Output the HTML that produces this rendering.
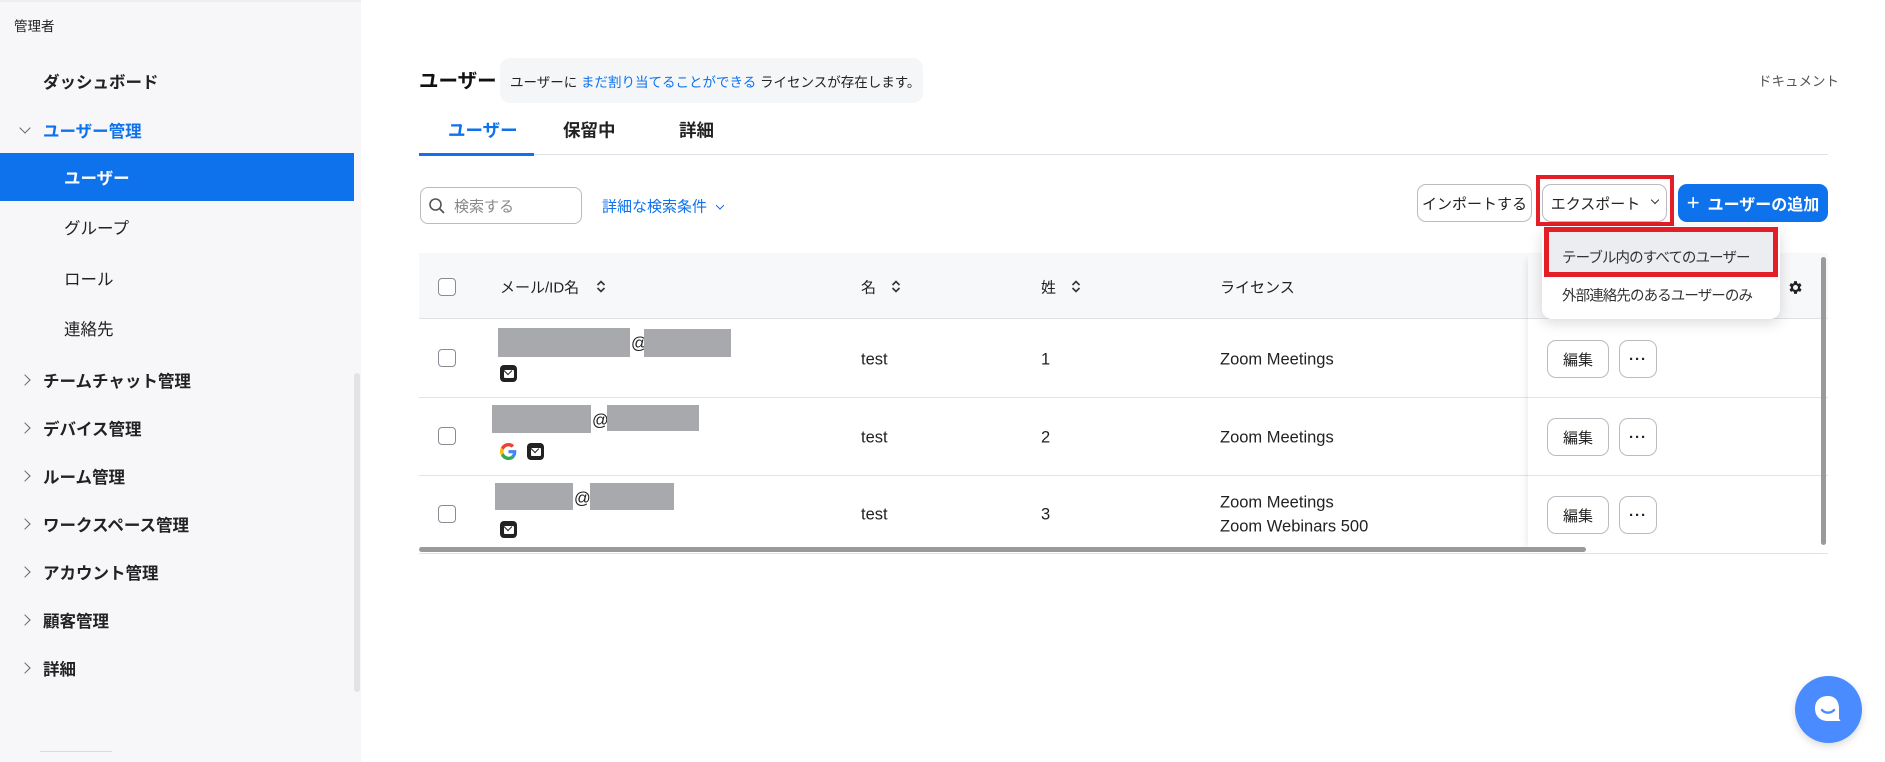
<!DOCTYPE html>
<html><head><meta charset="utf-8">
<style>
*{box-sizing:border-box;margin:0;padding:0}
body{width:1885px;height:762px;overflow:hidden;background:#fff;font-family:"Liberation Sans","Noto Sans CJK JP",sans-serif;color:#222;position:relative}
.a{position:absolute;white-space:nowrap}
.sb{position:absolute;left:0;top:0;width:361px;height:762px;background:#f7f7fa;border-top:2px solid #eee}
.nav{position:absolute;left:43px;font-size:16.5px;font-weight:bold;color:#222;transform:translateY(-50%)}
.sub{position:absolute;left:64px;font-size:16.5px;color:#222;transform:translateY(-50%)}
.chev{position:absolute;left:21px;width:8px;height:8px;border-right:1.5px solid #666;border-bottom:1.5px solid #666;transform:translateY(-50%) rotate(-45deg)}
.vc{transform:translateY(-50%)}
.btn{position:absolute;border:1px solid #babac0;border-radius:9px;background:#fff;font-size:15px;display:flex;align-items:center;justify-content:center}
.cb{position:absolute;left:438px;width:18px;height:18px;border:1.5px solid #8a8a95;border-radius:4px;background:#fff}
.blk{position:absolute;background:#a8a9ad}
.mail{position:absolute;width:17px;height:17px;background:#222;border-radius:4px}
.mail:before{content:"";position:absolute;left:3.5px;top:4.5px;width:10px;height:8px;background:#fff;border-radius:1px}
.mail:after{content:"";position:absolute;left:5px;top:3px;width:5px;height:5px;border-right:1.5px solid #222;border-bottom:1.5px solid #222;transform:rotate(45deg)}
.td{font-size:16.5px}
.sort{display:inline-block;width:12px;height:14px;margin-left:14px;vertical-align:middle;position:relative;top:-2px}
</style></head><body>
<div class="sb"></div>
<div class="a" style="left:14px;top:15px;font-size:13.5px">管理者</div>
<div class="nav" style="top:81px">ダッシュボード</div>
<div class="chev" style="top:128px;transform:translateY(-50%) rotate(45deg)"></div>
<div class="nav" style="top:130px;color:#0e72ed">ユーザー管理</div>
<div class="a" style="left:0;top:153px;width:354px;height:48px;background:#0e72ed"></div>
<div class="sub" style="top:177px;color:#fff;font-weight:bold">ユーザー</div>
<div class="sub" style="top:227px">グループ</div>
<div class="sub" style="top:278px">ロール</div>
<div class="sub" style="top:328px">連絡先</div>
<div class="chev" style="top:380px"></div><div class="nav" style="top:380px">チームチャット管理</div>
<div class="chev" style="top:428px"></div><div class="nav" style="top:428px">デバイス管理</div>
<div class="chev" style="top:476px"></div><div class="nav" style="top:476px">ルーム管理</div>
<div class="chev" style="top:524px"></div><div class="nav" style="top:524px">ワークスペース管理</div>
<div class="chev" style="top:572px"></div><div class="nav" style="top:572px">アカウント管理</div>
<div class="chev" style="top:620px"></div><div class="nav" style="top:620px">顧客管理</div>
<div class="chev" style="top:668px"></div><div class="nav" style="top:668px">詳細</div>
<div class="a" style="left:354px;top:373px;width:6px;height:319px;background:#e3e3e6;border-radius:3px"></div>
<div class="a" style="left:40px;top:751px;width:72px;height:1px;background:#dcdce0"></div>

<div class="a vc" style="left:419px;top:79px;font-size:19.5px;font-weight:bold;color:#111">ユーザー</div>
<div class="a" style="left:500px;top:58px;width:423px;height:45px;background:#f5f6f8;border-radius:10px"></div>
<div class="a vc" style="left:510px;top:81px;font-size:13.5px">ユーザーに <span style="color:#0e72ed">まだ割り当てることができる</span> ライセンスが存在します。</div>
<div class="a vc" style="left:1758px;top:80px;font-size:13.5px;color:#555">ドキュメント</div>

<div class="a vc" style="left:448px;top:130px;font-size:17.5px;font-weight:bold;color:#0e72ed">ユーザー</div>
<div class="a vc" style="left:563px;top:130px;font-size:17.5px;font-weight:bold">保留中</div>
<div class="a vc" style="left:679px;top:130px;font-size:17.5px;font-weight:bold">詳細</div>
<div class="a" style="left:419px;top:154px;width:1409px;height:1px;background:#dfe1e8"></div>
<div class="a" style="left:419px;top:153px;width:115px;height:3px;background:#0e72ed"></div>

<div class="a" style="left:420px;top:187px;width:162px;height:37px;border:1px solid #babac0;border-radius:8px"></div>
<svg class="a" style="left:428px;top:197px" width="18" height="18" viewBox="0 0 18 18"><circle cx="7.5" cy="7.5" r="5.5" fill="none" stroke="#555" stroke-width="1.6"/><path d="M11.5 11.5L16 16" stroke="#555" stroke-width="1.8"/></svg>
<div class="a vc" style="left:454px;top:206px;font-size:15px;color:#888">検索する</div>
<div class="a vc" style="left:602px;top:206px;font-size:15px;color:#0e72ed">詳細な検索条件 <span style="display:inline-block;width:6px;height:6px;border-right:1.5px solid #0e72ed;border-bottom:1.5px solid #0e72ed;transform:rotate(45deg);margin-left:6px;position:relative;top:-3px"></span></div>

<div class="btn" style="left:1417px;top:184px;width:115px;height:38px">インポートする</div>
<div class="btn" style="left:1542px;top:184px;width:125px;height:38px">エクスポート <span style="display:inline-block;width:6px;height:6px;border-right:1.5px solid #333;border-bottom:1.5px solid #333;transform:rotate(45deg);margin-left:12px;position:relative;top:-3px"></span></div>
<div class="a" style="left:1536px;top:175px;width:138px;height:51px;border:4px solid #e41e26"></div>
<div class="a" style="left:1678px;top:184px;width:150px;height:38px;background:#0e72ed;border-radius:9px;color:#fff;font-size:16px;font-weight:bold;display:flex;align-items:center;justify-content:center"><span style="font-weight:normal;font-size:22px;margin-right:8px;line-height:1">+</span>ユーザーの追加</div>

<!-- table -->
<div class="a" style="left:419px;top:253px;width:1409px;height:66px;background:#f7f8fa;border-bottom:1px solid #dfe1e5"></div>
<div class="cb" style="top:278px"></div>
<div class="a vc" style="left:500px;top:287px;font-size:15px">メール/ID名<svg class="sort" style="margin-left:16px" viewBox="0 0 12 14"><path d="M2.5 5.5L6 2l3.5 3.5M2.5 8.5L6 12l3.5-3.5" fill="none" stroke="#333" stroke-width="1.6"/></svg></div>
<div class="a vc" style="left:861px;top:287px;font-size:15px">名<svg class="sort" viewBox="0 0 12 14"><path d="M2.5 5.5L6 2l3.5 3.5M2.5 8.5L6 12l3.5-3.5" fill="none" stroke="#333" stroke-width="1.6"/></svg></div>
<div class="a vc" style="left:1041px;top:287px;font-size:15px">姓<svg class="sort" viewBox="0 0 12 14"><path d="M2.5 5.5L6 2l3.5 3.5M2.5 8.5L6 12l3.5-3.5" fill="none" stroke="#333" stroke-width="1.6"/></svg></div>
<div class="a vc" style="left:1220px;top:287px;font-size:15px">ライセンス</div>
<div class="a" style="left:419px;top:397px;width:1409px;height:1px;background:#e2e3e6"></div>
<div class="a" style="left:419px;top:475px;width:1409px;height:1px;background:#e2e3e6"></div>
<div class="a" style="left:419px;top:553px;width:1409px;height:1px;background:#e2e3e6"></div>

<div class="cb" style="top:349px"></div>
<div class="blk" style="left:498px;top:328px;width:132px;height:29px"></div>
<div class="a vc td" style="left:631px;top:344px">@</div>
<div class="blk" style="left:644px;top:329px;width:87px;height:28px"></div>
<div class="mail" style="left:500px;top:365px"></div>
<div class="a vc td" style="left:861px;top:360px">test</div>
<div class="a vc td" style="left:1041px;top:360px">1</div>
<div class="a vc td" style="left:1220px;top:360px">Zoom Meetings</div>

<div class="cb" style="top:427px"></div>
<div class="blk" style="left:492px;top:405px;width:99px;height:28px"></div>
<div class="a vc td" style="left:592px;top:421px">@</div>
<div class="blk" style="left:607px;top:405px;width:92px;height:26px"></div>
<svg class="a" style="left:500px;top:443px" width="17" height="17" viewBox="0 0 48 48"><path fill="#EA4335" d="M24 9.5c3.5 0 6.6 1.2 9.1 3.6l6.8-6.8C35.8 2.4 30.3 0 24 0 14.6 0 6.6 5.4 2.7 13.3l7.9 6.1C12.5 13.6 17.8 9.5 24 9.5z"/><path fill="#4285F4" d="M46.1 24.5c0-1.6-.1-3.1-.4-4.5H24v9h12.4c-.5 2.9-2.2 5.3-4.6 7l7.6 5.9c4.4-4.1 6.7-10.1 6.7-17.4z"/><path fill="#FBBC05" d="M10.5 28.6c-.5-1.4-.8-3-.8-4.6s.3-3.2.8-4.6l-7.9-6.1C1 16.6 0 20.2 0 24s.9 7.4 2.6 10.7l7.9-6.1z"/><path fill="#34A853" d="M24 48c6.5 0 11.9-2.1 15.9-5.8l-7.6-5.9c-2.1 1.4-4.900 2.300-8.3 2.3-6.2 0-11.5-4.2-13.4-9.9l-7.9 6.1C6.6 42.6 14.6 48 24 48z"/></svg>
<div class="mail" style="left:527px;top:443px"></div>
<div class="a vc td" style="left:861px;top:438px">test</div>
<div class="a vc td" style="left:1041px;top:438px">2</div>
<div class="a vc td" style="left:1220px;top:438px">Zoom Meetings</div>

<div class="cb" style="top:505px"></div>
<div class="blk" style="left:495px;top:483px;width:78px;height:27px"></div>
<div class="a vc td" style="left:574px;top:499px">@</div>
<div class="blk" style="left:590px;top:483px;width:84px;height:27px"></div>
<div class="mail" style="left:500px;top:521px"></div>
<div class="a vc td" style="left:861px;top:515px">test</div>
<div class="a vc td" style="left:1041px;top:515px">3</div>
<div class="a vc td" style="left:1220px;top:503px">Zoom Meetings</div>
<div class="a vc td" style="left:1220px;top:527px">Zoom Webinars 500</div>

<!-- sticky column -->
<div class="a" style="left:1528px;top:253px;width:300px;height:300px;box-shadow:-6px 0 8px -6px rgba(0,0,0,0.12)"></div>
<div class="btn" style="left:1547px;top:340px;width:62px;height:38px">編集</div>
<div class="btn" style="left:1619px;top:340px;width:38px;height:38px;font-weight:bold;letter-spacing:1px">···</div>
<div class="btn" style="left:1547px;top:418px;width:62px;height:38px">編集</div>
<div class="btn" style="left:1619px;top:418px;width:38px;height:38px;font-weight:bold;letter-spacing:1px">···</div>
<div class="btn" style="left:1547px;top:496px;width:62px;height:38px">編集</div>
<div class="btn" style="left:1619px;top:496px;width:38px;height:38px;font-weight:bold;letter-spacing:1px">···</div>
<svg class="a" style="left:1787px;top:279px" width="17" height="17" viewBox="0 0 24 24"><path fill="#222" d="M19.4 13a7.5 7.5 0 000-2l2.1-1.6-2-3.5-2.5 1a7.6 7.6 0 00-1.7-1L15 3h-4l-.4 2.9a7.6 7.6 0 00-1.7 1l-2.5-1-2 3.5L6.6 11a7.5 7.5 0 000 2l-2.1 1.6 2 3.5 2.5-1c.5.4 1.1.7 1.7 1L11 21h4l.4-2.9c.6-.3 1.2-.6 1.7-1l2.5 1 2-3.5zM13 15.5a3.5 3.5 0 110-7 3.5 3.5 0 010 7z" transform="translate(-1 0)"/></svg>
<div class="a" style="left:1821px;top:257px;width:5px;height:288px;background:#9a9a9a;border-radius:3px"></div>
<div class="a" style="left:419px;top:547px;width:1167px;height:5px;background:#9a9a9a;border-radius:3px"></div>

<!-- dropdown -->
<div class="a" style="left:1542px;top:226px;width:238px;height:93px;background:#fff;border-radius:10px;box-shadow:0 4px 14px rgba(0,0,0,0.15)"></div>
<div class="a" style="left:1544px;top:227px;width:234px;height:50px;background:#ecedf0;border:5px solid #e41e26"></div>
<div class="a vc" style="left:1562px;top:257px;font-size:14.5px;letter-spacing:-0.9px;color:#333">テーブル内のすべてのユーザー</div>
<div class="a vc" style="left:1562px;top:295px;font-size:14.5px;letter-spacing:-0.9px;color:#333">外部連絡先のあるユーザーのみ</div>

<!-- chat -->
<div class="a" style="left:1795px;top:676px;width:67px;height:67px;border-radius:50%;background:#4a8cff;box-shadow:0 3px 8px rgba(0,0,0,0.15)"></div>
<svg class="a" style="left:1810px;top:692px" width="36" height="36" viewBox="0 0 36 36"><path d="M18 4C10 4 5 9 5 16.5S10 29 18 29h12.5l-1.5-2.5V16.5C29 9 25 4 18 4z" fill="#fff"/><path d="M12 18c3 3.5 9 3.5 12 0" stroke="#4a8cff" stroke-width="2.4" fill="none" stroke-linecap="round"/></svg>
</body></html>
